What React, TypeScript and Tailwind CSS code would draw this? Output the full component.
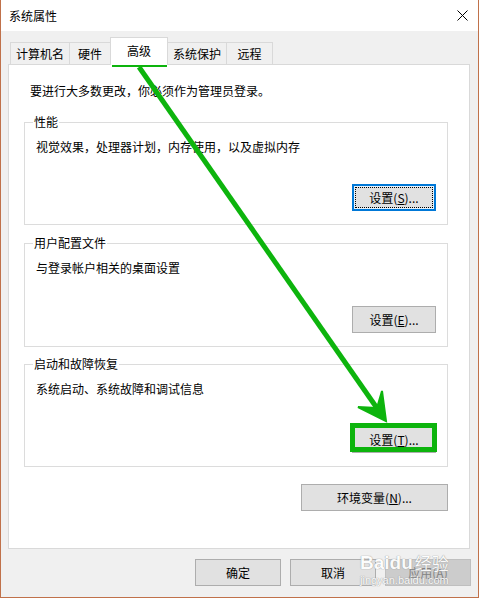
import React from "react";

const FONT = "font-['Microsoft_YaHei_UI','Noto_Sans_CJK_SC',sans-serif]";

function Btn({
  children,
  className = "",
  disabled = false,
}: {
  children: React.ReactNode;
  className?: string;
  disabled?: boolean;
}) {
  return (
    <div
      className={
        "flex h-[27px] items-center justify-center border text-[12px] leading-[16px] " +
        (disabled
          ? "border-[#bfbfbf] bg-[#cccccc] text-[#838383] "
          : "border-[#adadad] bg-[#e1e1e1] text-black ") +
        className
      }
    >
      {children}
    </div>
  );
}

function FocusBtn({ children }: { children: React.ReactNode }) {
  return (
    <div className="flex h-[27px] w-[84px] border-2 border-[#0078d7] bg-[#e5f1fb] p-px">
      <div className="flex flex-1 items-center justify-center border border-dotted border-black bg-[#e1e1e1] text-[12px] leading-[16px] text-black">
        {children}
      </div>
    </div>
  );
}

function Group({
  title,
  desc,
  button,
  height,
}: {
  title: string;
  desc: string;
  button: React.ReactNode;
  height: string;
}) {
  return (
    <div className={"relative flex flex-col border border-[#dcdcdc] " + height}>
      <div className="absolute left-[8px] top-[-9px] bg-white px-px text-[12px] leading-[16px] text-black">
        {title}
      </div>
      <div className="mt-[16px] pl-[11px] text-[12px] leading-[16px] text-black">{desc}</div>
      <div className="mt-auto mb-[13px] mr-[11px] self-end">{button}</div>
    </div>
  );
}

export default function App() {
  return (
    <div className={"relative h-[598px] w-[479px] overflow-hidden bg-[#f0f0f0] " + FONT}>
      <div className="flex h-[598px] w-[479px] flex-col border-x border-b border-[#c0714a]">
        {/* title bar */}
        <div className="flex h-[31px] shrink-0 items-center justify-between bg-white pl-[8px] pr-[10px]">
          <span className="text-[12px] leading-[16px] text-black">系统属性</span>
          <svg width="11" height="11" viewBox="0 0 11 11">
            <path d="M0.5 0.5 L10.5 10.5 M10.5 0.5 L0.5 10.5" stroke="#000" strokeWidth="1" />
          </svg>
        </div>

        {/* body */}
        <div className="flex flex-1 flex-col pl-[7px] pr-[8px]">
          {/* tabs */}
          <div className="relative z-10 ml-[2px] mt-[6px] flex h-[27px] items-end">
            <div className="flex h-[22px] w-[60px] items-center justify-center border border-b-0 border-[#d9d9d9] bg-[#f0f0f0] text-[12px] text-black">
              计算机名
            </div>
            <div className="-ml-px flex h-[22px] w-[42px] items-center justify-center border border-b-0 border-[#d9d9d9] bg-[#f0f0f0] text-[12px] text-black">
              硬件
            </div>
            <div className="-ml-px -mb-px flex h-[28px] w-[58px] justify-center border border-b-0 border-[#d9d9d9] bg-white pt-[5px] text-[12px] leading-[16px] text-black">
              高级
            </div>
            <div className="-ml-px flex h-[22px] w-[60px] items-center justify-center border border-b-0 border-[#d9d9d9] bg-[#f0f0f0] text-[12px] text-black">
              系统保护
            </div>
            <div className="-ml-px flex h-[22px] w-[47px] items-center justify-center border border-b-0 border-[#d9d9d9] bg-[#f0f0f0] text-[12px] text-black">
              远程
            </div>
          </div>

          {/* panel */}
          <div className="flex h-[485px] flex-col border border-[#d9d9d9] bg-white pl-[15px] pr-[21px]">
            <div className="ml-[6px] mt-[18px] text-[12px] leading-[16px] text-black">
              要进行大多数更改，你必须作为管理员登录。
            </div>
            <div className="mt-[23px]">
              <Group
                title="性能"
                desc="视觉效果，处理器计划，内存使用，以及虚拟内存"
                height="h-[103px]"
                button={
                  <FocusBtn>
                    设置(<u>S</u>)...
                  </FocusBtn>
                }
              />
            </div>
            <div className="mt-[18px]">
              <Group
                title="用户配置文件"
                desc="与登录帐户相关的桌面设置"
                height="h-[104px]"
                button={
                  <Btn className="w-[84px]">
                    设置(<u>E</u>)...
                  </Btn>
                }
              />
            </div>
            <div className="mt-[17px]">
              <Group
                title="启动和故障恢复"
                desc="系统启动、系统故障和调试信息"
                height="h-[103px]"
                button={
                  <Btn className="w-[84px]">
                    设置(<u>T</u>)...
                  </Btn>
                }
              />
            </div>
            <div className="mt-[17px] flex justify-end">
              <Btn className="w-[147px]">
                环境变量(<u>N</u>)...
              </Btn>
            </div>
          </div>

          {/* bottom buttons */}
          <div className="-mr-px mt-[10px] flex justify-end gap-[9px]">
            <Btn className="w-[86px]">确定</Btn>
            <Btn className="w-[86px]">取消</Btn>
            <Btn className="w-[86px]" disabled>
              应用(<u>A</u>)
            </Btn>
          </div>
        </div>
      </div>

      {/* watermark */}
      <div className="pointer-events-none absolute left-[360px] top-[552px] flex flex-col items-start text-white opacity-90">
        <div className="flex items-end font-['Liberation_Sans',sans-serif] text-[19px] font-bold leading-[22px] [text-shadow:0_0_1px_#9a9a9a,0_0_1px_#9a9a9a]">
          <span>Bai</span>
          <span>du</span>
          <span className={"ml-[2px] text-[17px] font-normal " + FONT}>经验</span>
        </div>
        <div className="font-['Liberation_Sans',sans-serif] text-[11px] leading-[12px] [text-shadow:0_0_1px_#9a9a9a,0_0_1px_#9a9a9a]">
          jingyan.baidu.com
        </div>
      </div>

      {/* annotations */}
      <svg
        className="pointer-events-none absolute left-0 top-0"
        width="479"
        height="598"
        viewBox="0 0 479 598"
      >
        <rect x="114.5" y="39.5" width="50" height="25" fill="none" stroke="#0db40d" strokeWidth="5" />
        <rect x="352.5" y="425.5" width="82" height="24" fill="none" stroke="#0db40d" strokeWidth="5" />
        <line x1="139" y1="67" x2="379" y2="411" stroke="#0db40d" strokeWidth="5" />
        <polygon points="386,421 358,407 377,408 382,391" fill="#0db40d" stroke="#0db40d" strokeWidth="2" strokeLinejoin="miter" />
      </svg>
    </div>
  );
}
